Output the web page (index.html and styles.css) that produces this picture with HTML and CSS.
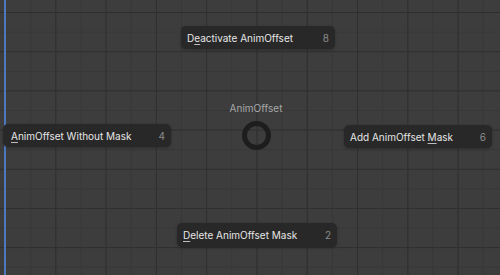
FILE: index.html
```html
<!DOCTYPE html>
<html lang="en">
<head>
  <meta charset="UTF-8">
  <meta name="viewport" content="width=device-width, initial-scale=1.0">
  <title>AnimOffset pie</title>
  <link rel="stylesheet" href="styles.css">
</head>
<body>
  <div class="editor">
    <div class="playhead"></div>

    <div class="pie">
      <div class="pie-item top">
        <span class="label">D<u>e</u>activate AnimOffset</span>
        <span class="key">8</span>
      </div>
      <div class="pie-item left">
        <span class="label"><u>A</u>nimOffset Without Mask</span>
        <span class="key">4</span>
      </div>
      <div class="pie-item right">
        <span class="label">Add AnimOffset <u>M</u>ask</span>
        <span class="key">6</span>
      </div>
      <div class="pie-item bottom">
        <span class="label"><u>D</u>elete AnimOffset Mask</span>
        <span class="key">2</span>
      </div>

      <div class="pie-title">AnimOffset</div>
      <div class="pie-ring"></div>
    </div>
  </div>
</body>
</html>
```

FILE: styles.css
```css
body {
  margin: 0;
  padding: 0;
  background-color: #3d3d3d;
  font-family: Inter, "DejaVu Sans", sans-serif;
  overflow: hidden;
}

/* graph editor grid */
.editor {
  position: relative;
  width: 500px;
  height: 275px;
  background-color: #3d3d3d;
  background-image:
    linear-gradient(to right, #2f2f2f 1px, transparent 1px),
    linear-gradient(to bottom, #2f2f2f 1px, transparent 1px),
    linear-gradient(to right, #373737 1px, transparent 1px),
    linear-gradient(to bottom, #373737 1px, transparent 1px);
  background-size:
    50.3px 100%,
    100% 39.2px,
    25.15px 100%,
    100% 19.6px;
  background-position:
    5px 0,
    0 12px,
    5px 0,
    0 12px;
}

.playhead {
  position: absolute;
  left: 4px;
  top: 0;
  width: 2px;
  height: 100%;
  background-color: #4c79be;
}

.pie {
  position: absolute;
  inset: 0;
}

.pie-item {
  position: absolute;
  height: 23px;
  display: flex;
  align-items: center;
  justify-content: space-between;
  padding: 0 6px 0 6px;
  box-sizing: border-box;
  background-color: #282828;
  border-radius: 5px;
  font-size: 10px;
  color: #e6e6e6;
  box-shadow: 0 1px 3px rgba(0, 0, 0, 0.25);
}

.pie-item u {
  text-decoration-thickness: 1px;
  text-underline-offset: 2px;
  text-decoration-color: #bdbdbd;
}

.pie-item .key {
  color: #8c8c8c;
}

.top {
  left: 181px;
  top: 26px;
  width: 154px;
}

.left {
  left: 3px;
  top: 124px;
  width: 168px;
  padding-left: 8px;
}

.right {
  left: 344px;
  top: 125px;
  width: 148px;
}

.bottom {
  left: 177px;
  top: 223px;
  width: 160px;
  height: 24px;
}

.pie-title {
  position: absolute;
  left: 206px;
  width: 100px;
  top: 102px;
  text-align: center;
  font-size: 10px;
  color: #a8a8a8;
}

.pie-ring {
  position: absolute;
  left: 242px;
  top: 121px;
  width: 29px;
  height: 29px;
  box-sizing: border-box;
  border: 5.5px solid #1d1d1d;
  border-radius: 50%;
}
```
